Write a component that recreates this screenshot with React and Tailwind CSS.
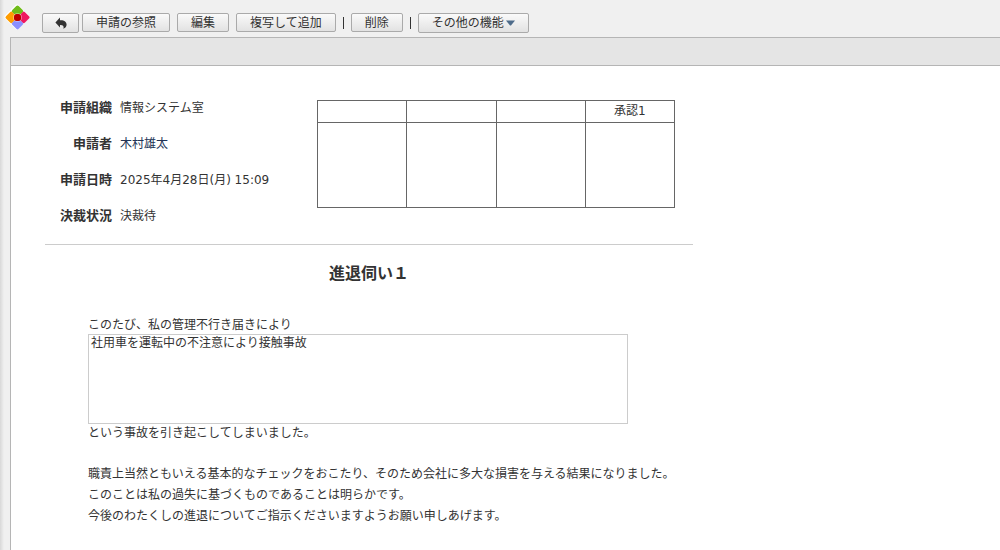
import { useState } from 'react';

const datos = [
  { label: '申請組織', value: '情報システム室' },
  { label: '申請者', value: '木村雄太', link: true },
  { label: '申請日時', value: '2025年4月28日(月) 15:09' },
  { label: '決裁状況', value: '決裁待' },
];

const aprobadores = ['', '', '', '承認1'];

function Logo() {
  return (
    <svg viewBox="0 0 26 26" className="size-[26px]" aria-hidden="true">
      <g stroke="#fff" strokeWidth="5" strokeLinejoin="round" fill="#fff">
        <path d="M13 3 17 7 13 11 9 7Z" />
        <path d="M13 15 17 19 13 23 9 19Z" />
        <path d="M7 9 11 13 7 17 3 13Z" />
        <path d="M19 9 23 13 19 17 15 13Z" />
      </g>
      <g strokeWidth="3.4" strokeLinejoin="round">
        <path d="M13.5 3.2 17.5 7.2 13.5 11.2 9.5 7.2Z" fill="#70bc1b" stroke="#70bc1b" />
        <path d="M13.5 15.6 17.5 19.6 13.5 23.6 9.5 19.6Z" fill="#8b8fff" stroke="#8b8fff" />
        <path d="M7.2 9.4 11.2 13.4 7.2 17.4 3.2 13.4Z" fill="#ff9d00" stroke="#ff9d00" />
        <path d="M19.8 9.4 23.8 13.4 19.8 17.4 15.8 13.4Z" fill="#ee1860" stroke="#ee1860" />
      </g>
      <rect x="9.5" y="9.4" width="8" height="8" rx="3.2" fill="#fff" fillOpacity="0.7" />
      <rect x="10" y="9.9" width="7" height="7" rx="2.5" fill="#bb0000" />
    </svg>
  );
}

function ToolButton({ children, className = 'h-[19px] px-[13px]', ...props }) {
  return (
    <button
      type="button"
      className={`flex shrink-0 items-center justify-center whitespace-nowrap rounded-xs border border-[#aaa] bg-linear-to-b from-[#fafafa] to-[#e2e2e2] leading-4 hover:to-[#d6d6d6] ${className}`}
      {...props}
    >
      {children}
    </button>
  );
}

function Separator() {
  return <span className="h-3 w-px shrink-0 bg-[#333]" />;
}

export default function App() {
  const [motivo, setMotivo] = useState('社用車を運転中の不注意により接触事故');

  return (
    <div className="flex min-h-screen flex-col overflow-x-hidden bg-linear-to-r from-[#d8d8d8] to-[#f0f0f0] to-[4px] pl-2.5 font-['DejaVu_Sans','Noto_Sans_CJK_JP',sans-serif] text-[12px] text-[#333]">
      {/* Barra de herramientas */}
      <header className="flex h-[37px] items-start">
        <a href="#" aria-label="ホーム" className="-ml-1.5 mt-1 shrink-0">
          <Logo />
        </a>
        <div className="ml-3 mt-[13px] flex items-start gap-[7px]">
          <div className="flex items-start gap-[3px]">
            <ToolButton className="h-5 w-[37px]" aria-label="戻る">
              <svg viewBox="0 0 12 12" className="size-3" fill="#333" aria-hidden="true">
                <path d="M5 0.6V3.2C9.2 2.9 11.7 5 11.6 7.8C11.5 9.7 10.4 11.1 8.3 11.8C9.3 9.4 8.3 8 5 8.1V10.6L0.4 5.6Z" />
              </svg>
            </ToolButton>
            <ToolButton>申請の参照</ToolButton>
          </div>
          <ToolButton>編集</ToolButton>
          <ToolButton>複写して追加</ToolButton>
          <div className="flex items-center gap-[7px]">
            <Separator />
            <ToolButton>削除</ToolButton>
            <Separator />
          </div>
          <ToolButton className="h-5 px-[13px]" aria-haspopup="menu">
            その他の機能
            <svg viewBox="0 0 9 6" className="ml-0.5 h-1.5 w-[9px]" fill="#4d6b8a" aria-hidden="true">
              <path d="M0 0.5H9L5 5.5H4Z" />
            </svg>
          </ToolButton>
        </div>
      </header>

      <main className="grow border-l border-t border-[#b5b5b5] bg-white">
        <div className="h-7 border-b border-[#b5b5b5] bg-[#e5e5e5]" />

        <div className="ml-[34px] max-w-[648px] pt-[34px]">
          {/* Datos de la solicitud */}
          <section className="flex items-start border-b border-[#ccc] pb-4">
            <dl className="flex w-[272px] shrink-0 flex-col gap-4">
              {datos.map((d) => (
                <div key={d.label} className="flex h-5 gap-2 leading-4">
                  <dt className="w-[67px] text-right text-[13px] font-bold leading-4">{d.label}</dt>
                  <dd className="whitespace-nowrap">
                    {d.link ? (
                      <a href="#" className="text-[#223355]">{d.value}</a>
                    ) : (
                      d.value
                    )}
                  </dd>
                </div>
              ))}
            </dl>

            <table className="w-[358px] table-fixed border-collapse text-center leading-4">
              <thead>
                <tr className="h-[22px]">
                  {aprobadores.map((a, i) => (
                    <th key={i} className="border border-[#666] p-0 pb-0.5 align-middle font-normal">{a}</th>
                  ))}
                </tr>
              </thead>
              <tbody>
                <tr className="h-[85px]">
                  {aprobadores.map((a, i) => (
                    <td key={i} className="border border-[#666]" />
                  ))}
                </tr>
              </tbody>
            </table>
          </section>

          <h1 className="mt-[17px] text-center text-[16px] font-bold leading-6">進退伺い１</h1>

          {/* Texto del formulario */}
          <section className="ml-[43px] mt-[30px]">
            <label htmlFor="motivo" className="block leading-[18px]">
              このたび、私の管理不行き届きにより
            </label>
            <textarea
              id="motivo"
              value={motivo}
              onChange={(e) => setMotivo(e.target.value)}
              rows={5}
              className="block h-[90px] w-full max-w-[540px] resize-none border border-[#ccc] bg-white px-0.5 leading-4 outline-none"
            />
            <p className="leading-[18px]">という事故を引き起こしてしまいました。</p>
            <p className="mt-[22px] whitespace-nowrap leading-[21px]">
              職責上当然ともいえる基本的なチェックをおこたり、そのため会社に多大な損害を与える結果になりました。
              <br />
              このことは私の過失に基づくものであることは明らかです。
              <br />
              今後のわたくしの進退についてご指示くださいますようお願い申しあげます。
            </p>
          </section>
        </div>
      </main>
    </div>
  );
}
